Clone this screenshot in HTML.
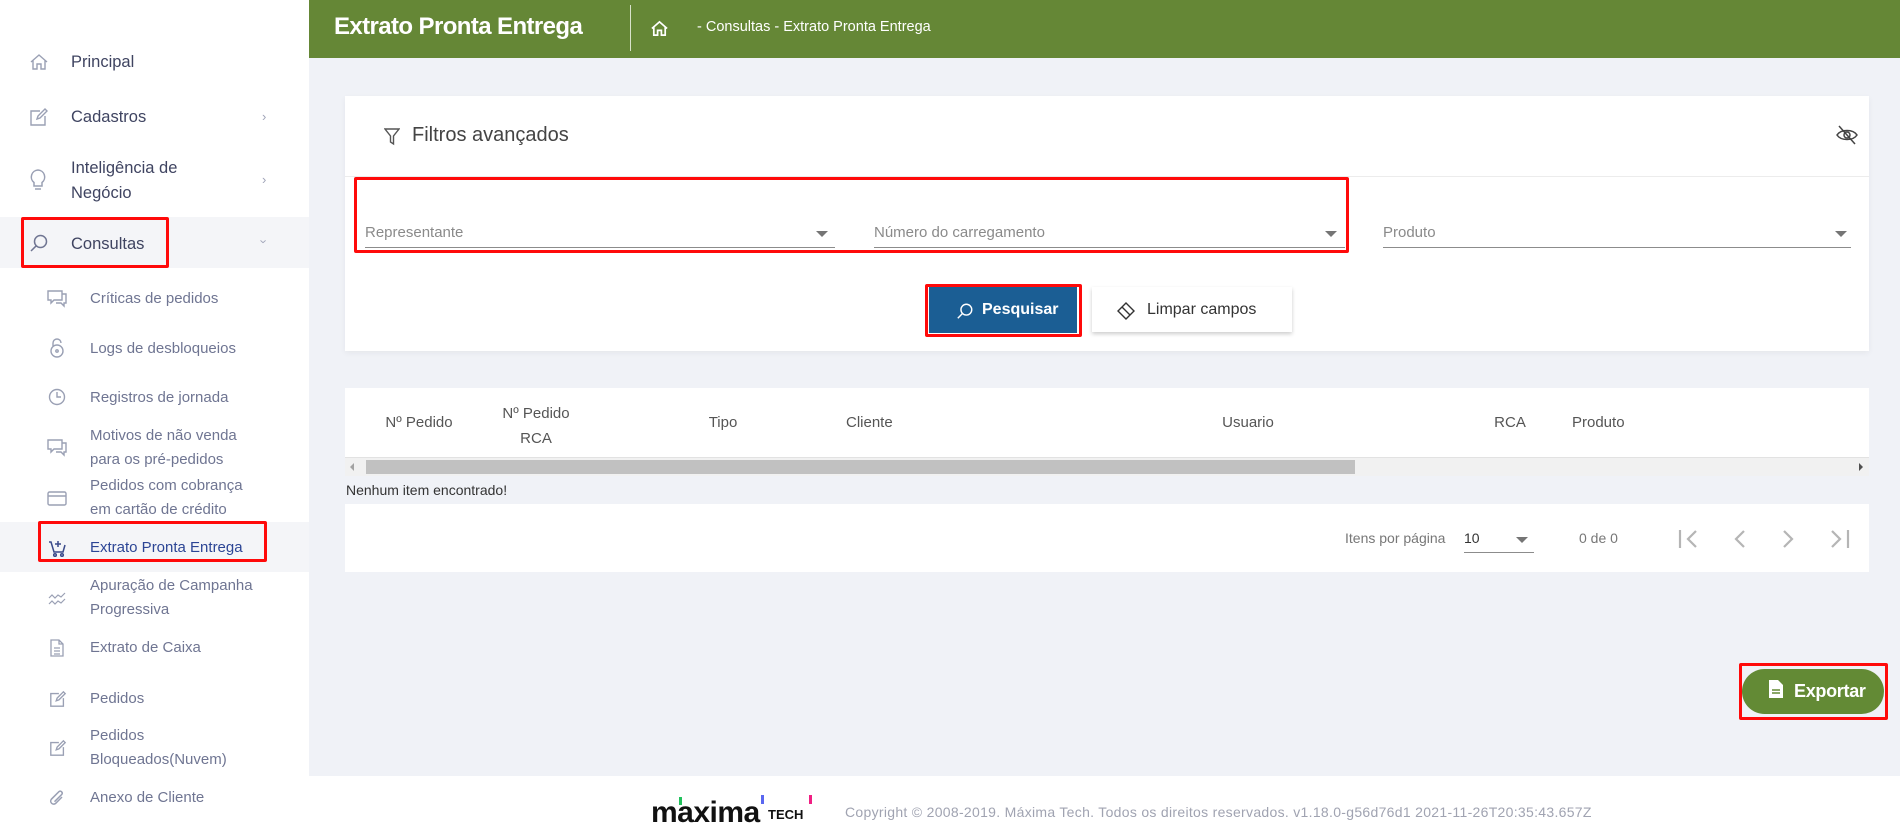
<!DOCTYPE html>
<html><head><meta charset="utf-8"><style>
*{margin:0;padding:0;box-sizing:border-box}
body{width:1900px;height:839px;position:relative;overflow:hidden;background:#f0f2f7;font-family:"Liberation Sans",sans-serif}
.a{position:absolute}
.side{left:0;top:0;width:309px;height:839px;background:#fff}
.it{position:absolute;left:71px;font-size:16.5px;color:#3f4461;line-height:24px}
.sub{position:absolute;left:90px;font-size:15px;color:#6f7592;line-height:24px}
.ic{position:absolute}
.chev{position:absolute;left:262px;color:#a0a4b8;font-size:13px}
.hdr{left:309px;top:0;width:1591px;height:58px;background:#658736}
.card{background:#fff}
.lbl{font-size:15px;color:#8a8a8a}
.ul{height:1px;background:#8c8c8c}
.tri{width:0;height:0;border-left:6px solid transparent;border-right:6px solid transparent;border-top:6px solid #757575}
.th{font-size:15px;color:#555;text-align:center}
.red{border:3px solid #ff0a0a;border-radius:2px}
</style></head><body>
<div class="a side">
 <div class="a" style="left:0;top:217px;width:309px;height:51px;background:#f4f5f8"></div>
 <div class="a" style="left:0;top:522px;width:309px;height:50px;background:#f4f5f8"></div>
 <svg class="ic" style="left:29px;top:52px" width="20" height="20" viewBox="0 0 20 20" fill="none" stroke="#9aa0b4" stroke-width="1.4"><path d="M2 10 L10 3 L18 10 M4 8.5 V17 H8 V12 H12 V17 H16 V8.5"/></svg>
 <svg class="ic" style="left:29px;top:107px" width="20" height="20" viewBox="0 0 20 20" fill="none" stroke="#9aa0b4" stroke-width="1.4"><path d="M11 4 H2 V18 H16 V9 M8 12 L9 9 L16 2 L18 4 L11 11 Z"/></svg>
 <svg class="ic" style="left:28px;top:168px" width="20" height="24" viewBox="0 0 20 24" fill="none" stroke="#9aa0b4" stroke-width="1.5"><path d="M10 2 a7 7 0 0 0 -4 12.5 V18 H14 V14.5 A7 7 0 0 0 10 2 Z M7 21 H13"/></svg>
 <svg class="ic" style="left:29px;top:233px" width="20" height="20" viewBox="0 0 20 20" fill="none" stroke="#6f7592" stroke-width="1.5"><circle cx="11.5" cy="8.5" r="6"/><path d="M7.2 12.8 L2 18"/></svg>
 <svg class="ic" style="left:47px;top:290px" width="20" height="18" viewBox="0 0 20 18" fill="none" stroke="#9aa0b4" stroke-width="1.4"><path d="M1 1 H15 V10 H7 L4 13 V10 H1 Z M15 4 H19 V13 H17 V16 L14 13 H9"/></svg>
 <svg class="ic" style="left:50px;top:338px" width="14" height="20" viewBox="0 0 14 20" fill="none" stroke="#9aa0b4" stroke-width="1.4"><path d="M3 8 V5 a4 4 0 0 1 8 0"/><circle cx="7" cy="13" r="6"/><circle cx="7" cy="13" r="1.2"/></svg>
 <svg class="ic" style="left:48px;top:388px" width="18" height="18" viewBox="0 0 18 18" fill="none" stroke="#9aa0b4" stroke-width="1.4"><circle cx="9" cy="9" r="7.5"/><path d="M9 4 V9 H13"/></svg>
 <svg class="ic" style="left:47px;top:439px" width="20" height="18" viewBox="0 0 20 18" fill="none" stroke="#9aa0b4" stroke-width="1.4"><path d="M1 1 H15 V10 H7 L4 13 V10 H1 Z M15 4 H19 V13 H17 V16 L14 13 H9"/></svg>
 <svg class="ic" style="left:47px;top:491px" width="20" height="15" viewBox="0 0 20 15" fill="none" stroke="#9aa0b4" stroke-width="1.4"><rect x="1" y="1" width="18" height="13" rx="1.5"/><path d="M1 5 H19"/></svg>
 <svg class="ic" style="left:48px;top:539px" width="18" height="18" viewBox="0 0 18 18" fill="none" stroke="#3a4a8a" stroke-width="1.5"><path d="M1 3 H3 L6 13 H15 L17 6 M10 2 V8 M7 5 H13"/><circle cx="7" cy="16" r="1.3"/><circle cx="14" cy="16" r="1.3"/></svg>
 <svg class="ic" style="left:48px;top:592px" width="18" height="14" viewBox="0 0 18 14" fill="none" stroke="#9aa0b4" stroke-width="1.2"><path d="M1 6 L4 3 L7 6 L10 3 L13 5 L17 1 M1 12 L4 9 L7 12 L10 9 L13 11 L17 7"/></svg>
 <svg class="ic" style="left:50px;top:639px" width="14" height="18" viewBox="0 0 14 18" fill="none" stroke="#9aa0b4" stroke-width="1.3"><path d="M1 1 H9 L13 5 V17 H1 Z M9 1 V5 H13 M4 9 H10 M4 12 H10 M4 15 H10"/></svg>
 <svg class="ic" style="left:49px;top:690px" width="18" height="18" viewBox="0 0 20 20" fill="none" stroke="#9aa0b4" stroke-width="1.5"><path d="M11 4 H2 V18 H16 V9 M8 12 L9 9 L16 2 L18 4 L11 11 Z"/></svg>
 <svg class="ic" style="left:49px;top:739px" width="18" height="18" viewBox="0 0 20 20" fill="none" stroke="#9aa0b4" stroke-width="1.5"><path d="M11 4 H2 V18 H16 V9 M8 12 L9 9 L16 2 L18 4 L11 11 Z"/></svg>
 <svg class="ic" style="left:49px;top:789px" width="16" height="18" viewBox="0 0 16 18" fill="none" stroke="#9aa0b4" stroke-width="1.5"><path d="M13 8 L6.5 14.5 a3 3 0 0 1 -4.2 -4.2 L10 2.6 a2 2 0 0 1 2.8 2.8 L5.5 12.7"/></svg>

 <div class="it" style="top:50px">Principal</div>
 <div class="it" style="top:105px">Cadastros</div><div class="chev" style="top:109px">&#x203A;</div>
 <div class="it" style="top:156px;line-height:25px">Inteligência de<br>Negócio</div><div class="chev" style="top:172px">&#x203A;</div>
 <div class="it" style="top:232px">Consultas</div><div class="chev" style="top:234px;transform:rotate(90deg)">&#x203A;</div>
 <div class="sub" style="top:287px">Críticas de pedidos</div>
 <div class="sub" style="top:337px">Logs de desbloqueios</div>
 <div class="sub" style="top:386px">Registros de jornada</div>
 <div class="sub" style="top:424px">Motivos de não venda<br>para os pré-pedidos</div>
 <div class="sub" style="top:474px">Pedidos com cobrança<br>em cartão de crédito</div>
 <div class="sub" style="top:536px;color:#2c4595">Extrato Pronta Entrega</div>
 <div class="sub" style="top:574px">Apuração de Campanha<br>Progressiva</div>
 <div class="sub" style="top:636px">Extrato de Caixa</div>
 <div class="sub" style="top:687px">Pedidos</div>
 <div class="sub" style="top:724px">Pedidos<br>Bloqueados(Nuvem)</div>
 <div class="sub" style="top:786px">Anexo de Cliente</div>
 <div class="a red" style="left:21px;top:217px;width:148px;height:51px"></div>
 <div class="a red" style="left:38px;top:521px;width:229px;height:41px"></div>
</div>

<div class="a hdr">
 <div class="a" style="left:25px;top:13px;color:#fff;font-size:24px;font-weight:bold;letter-spacing:-0.6px">Extrato Pronta Entrega</div>
 <div class="a" style="left:321px;top:5px;width:1px;height:46px;background:#d8e2cb"></div>
 <svg class="a" style="left:341px;top:19px" width="19" height="19" viewBox="0 0 20 20" fill="none" stroke="#fff" stroke-width="1.8"><path d="M2 10 L10 3 L18 10 M4 8.5 V17 H8 V12 H12 V17 H16 V8.5"/></svg>
 <div class="a" style="left:388px;top:19px;color:#fff;font-size:14.5px">- Consultas - Extrato Pronta Entrega</div>
</div>

<div class="a card" style="left:345px;top:96px;width:1524px;height:255px;box-shadow:0 2px 6px rgba(0,0,0,.05)">
 <svg class="a" style="left:39px;top:32px" width="16" height="18" viewBox="0 0 16 18" fill="none" stroke="#555" stroke-width="1.4"><path d="M1 1 H15 L9.5 8 V16 L6.5 14 V8 Z"/></svg>
 <div class="a" style="left:67px;top:28px;font-size:20px;color:#444">Filtros avançados</div>
 <svg class="a" style="left:1491px;top:29px" width="22" height="20" viewBox="0 0 22 20" fill="none" stroke="#444" stroke-width="1.5"><path d="M1 10 C5 4 17 4 21 10 C17 16 5 16 1 10 Z"/><circle cx="11" cy="10" r="3"/><path d="M3 1 L19 19"/></svg>
 <div class="a" style="left:0;top:80px;width:1524px;height:1px;background:#ececec"></div>
 <div class="a lbl" style="left:20px;top:128px">Representante</div>
 <div class="a tri" style="left:471px;top:135px"></div>
 <div class="a ul" style="left:20px;top:151px;width:470px"></div>
 <div class="a lbl" style="left:529px;top:128px">Número do carregamento</div>
 <div class="a tri" style="left:980px;top:135px"></div>
 <div class="a ul" style="left:529px;top:151px;width:471px"></div>
 <div class="a lbl" style="left:1038px;top:128px">Produto</div>
 <div class="a tri" style="left:1490px;top:135px"></div>
 <div class="a ul" style="left:1038px;top:151px;width:468px"></div>
 <div class="a red" style="left:9px;top:81px;width:995px;height:76px"></div>
 <div class="a" style="left:584px;top:190px;width:148px;height:47px;background:#1b5e94;color:#fff;font-size:16px;font-weight:bold">
  <svg class="a" style="left:27px;top:16px" width="18" height="18" viewBox="0 0 20 20" fill="none" stroke="#fff" stroke-width="1.6"><circle cx="11.5" cy="8.5" r="6"/><path d="M7.2 12.8 L2 18"/></svg>
  <span class="a" style="left:53px;top:15px">Pesquisar</span></div>
 <div class="a red" style="left:580px;top:188px;width:157px;height:53px"></div>
 <div class="a" style="left:747px;top:191px;width:200px;height:45px;background:#fff;box-shadow:0 2px 4px rgba(0,0,0,.2);font-size:16px;color:#333">
  <svg class="a" style="left:25px;top:15px" width="18" height="18" viewBox="0 0 18 18" fill="none" stroke="#333" stroke-width="1.4"><path d="M9 1 L17 9 L9 17 L1 9 Z M5 5 L13 13"/></svg>
  <span class="a" style="left:55px;top:14px">Limpar campos</span></div>
</div>

<div class="a card" style="left:345px;top:388px;width:1524px;height:70px;border-bottom:1px solid #e2e2e2">
 <div class="a th" style="left:29px;top:26px;width:90px">Nº Pedido</div>
 <div class="a th" style="left:146px;top:13px;width:90px;line-height:25px">Nº Pedido<br>RCA</div>
 <div class="a th" style="left:333px;top:26px;width:90px">Tipo</div>
 <div class="a th" style="left:501px;top:26px;text-align:left">Cliente</div>
 <div class="a th" style="left:858px;top:26px;width:90px">Usuario</div>
 <div class="a th" style="left:1120px;top:26px;width:90px">RCA</div>
 <div class="a th" style="left:1227px;top:26px;text-align:left">Produto</div>
</div>
<div class="a" style="left:345px;top:458px;width:1524px;height:18px;background:#f1f1f1">
 <div class="a" style="left:21px;top:2px;width:989px;height:14px;background:#c1c1c1"></div>
 <div class="a" style="left:5px;top:5px;border-right:4px solid #a3a3a3;border-top:4px solid transparent;border-bottom:4px solid transparent"></div>
 <div class="a" style="left:1514px;top:5px;border-left:4px solid #505050;border-top:4px solid transparent;border-bottom:4px solid transparent"></div>
</div>
<div class="a" style="left:346px;top:482px;font-size:14px;color:#333">Nenhum item encontrado!</div>

<div class="a card" style="left:345px;top:504px;width:1524px;height:68px">
 <div class="a" style="left:1000px;top:26px;font-size:14px;color:#777">Itens por página</div>
 <div class="a" style="left:1119px;top:26px;font-size:14px;color:#333">10</div>
 <div class="a tri" style="left:1171px;top:33px"></div>
 <div class="a ul" style="left:1119px;top:48px;width:70px"></div>
 <div class="a" style="left:1234px;top:26px;font-size:14px;color:#777">0 de 0</div>
 <svg class="a" style="left:1332px;top:24px" width="300" height="22" viewBox="0 0 300 22" fill="none" stroke="#b5b5b5" stroke-width="2.2"><path d="M3 2 V20 M19 3 L11 11 L19 19"/><path d="M67 3 L59 11 L67 19"/><path d="M107 3 L115 11 L107 19"/><path d="M155 3 L163 11 L155 19 M171 2 V20"/></svg>
</div>

<div class="a" style="left:1742px;top:669px;width:142px;height:45px;border-radius:23px;background:#638a35;color:#fff;font-size:18px;font-weight:bold">
 <svg class="a" style="left:26px;top:10px" width="16" height="20" viewBox="0 0 16 20"><path d="M1 1 H10 L15 6 V19 H1 Z" fill="#fff"/><path d="M4 11 H12 M4 14 H12" stroke="#638a35" stroke-width="1.6"/></svg>
 <span class="a" style="left:52px;top:12px;letter-spacing:-0.3px">Exportar</span>
</div>
<div class="a red" style="left:1739px;top:663px;width:149px;height:57px"></div>

<div class="a" style="left:309px;top:776px;width:1591px;height:63px;background:#fff">
 <div class="a" style="left:342px;top:20px;font-size:30px;font-weight:bold;color:#111;letter-spacing:-0.5px">maxima</div>
 <div class="a" style="left:370px;top:21px;width:3px;height:8px;background:#21c15c"></div>
 <div class="a" style="left:452px;top:19px;width:3px;height:9px;background:#5a67f0"></div>
 <div class="a" style="left:500px;top:19px;width:3px;height:9px;background:#f01f83"></div>
 <div class="a" style="left:459px;top:31px;font-size:13px;font-weight:bold;color:#111">TECH</div>
 <div class="a" style="left:536px;top:28px;font-size:14px;color:#a0a3b1;letter-spacing:0.3px">Copyright © 2008-2019. Máxima Tech. Todos os direitos reservados. v1.18.0-g56d76d1 2021-11-26T20:35:43.657Z</div>
</div>
</body></html>
